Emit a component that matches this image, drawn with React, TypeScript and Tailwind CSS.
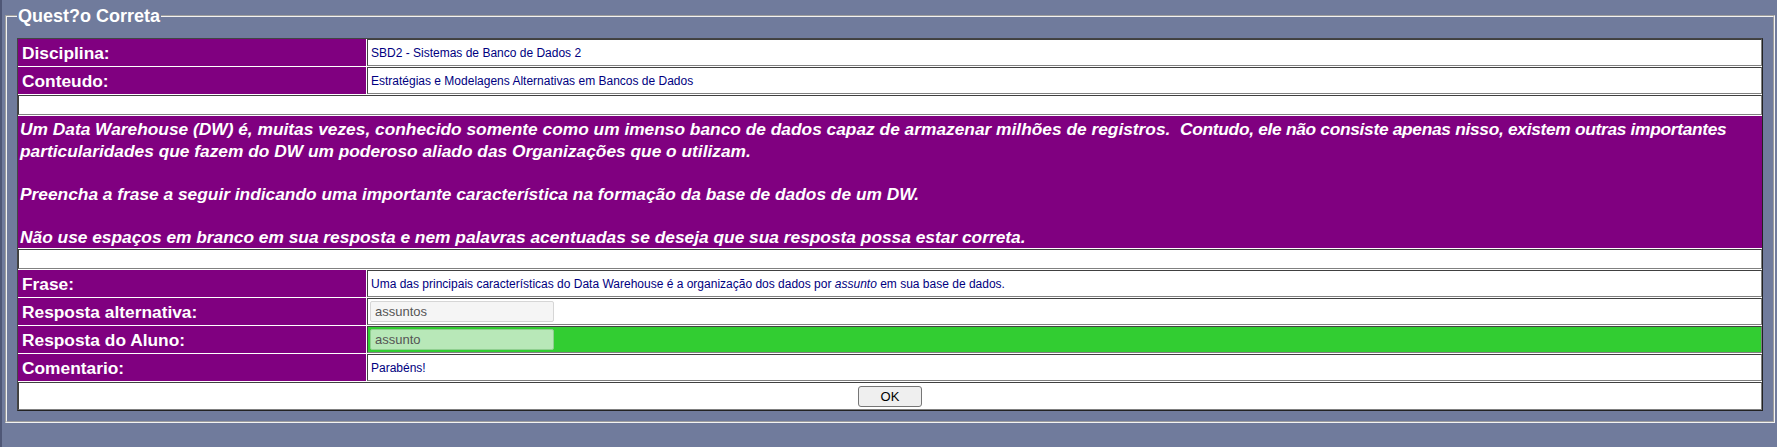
import React from "react";

const label =
  "bg-[#800080] text-white font-bold text-[17.33px] leading-[20px] flex items-center pl-[4px] h-[27px]";
const value =
  "bg-white flex items-center pl-[3px] h-[27px] text-[12px] text-[#000080] border border-t-[#404040] border-l-[#404040] border-b-[#808080] border-r-[#808080]";
const blank =
  "col-span-2 bg-white h-[20px] border border-t-[#404040] border-l-[#404040] border-b-[#808080] border-r-[#808080]";

export default function App() {
  return (
    <div className="min-h-screen bg-[#707b9c] border-l-2 border-[#4f5776] pl-[3px] pr-[2px] pt-[5px] font-['Liberation_Sans',Arial,sans-serif]">
      <fieldset className="border-2 [border-style:groove] border-[#f2f2f2] pl-[10px] pr-[10px] pt-[11px] pb-[10px]">
        <legend className="px-[1px] text-[18px] leading-[22px] font-bold text-white">
          Quest?o Correta
        </legend>
        <div className="grid grid-cols-[348px_1395px] gap-px bg-white border border-t-[#444] border-l-[#444] border-b-[#222] border-r-[#222] w-[1746px]">
          <div className={label}>Disciplina:</div>
          <div className={value}>SBD2 - Sistemas de Banco de Dados 2</div>

          <div className={label}>Conteudo:</div>
          <div className={value}>
            Estratégias e Modelagens Alternativas em Bancos de Dados
          </div>

          <div className={blank}></div>

          <div className="col-span-2 bg-[#800080] h-[132px] pt-[3px] pl-[2px] text-white font-bold italic text-[17.33px] leading-[21.5px]">
            Um Data Warehouse (DW) é, muitas vezes, conhecido somente como um
            imenso banco de dados capaz de armazenar milhões de registros.{"\u00a0"}{" "}
            <span className="tracking-[-0.3px]">
              Contudo, ele não consiste apenas nisso, existem outras importantes
            </span>{" "}
            particularidades que fazem do DW um poderoso aliado das Organizações
            que o utilizam.
            <br />
            <br />
            Preencha a frase a seguir indicando uma importante característica na
            formação da base de dados de um DW.
            <br />
            <br />
            Não use espaços em branco em sua resposta e nem palavras acentuadas
            se deseja que sua resposta possa estar correta.
          </div>

          <div className={blank}></div>

          <div className={label}>Frase:</div>
          <div className={value}>
            <span>
              Uma das principais características do Data Warehouse é a
              organização dos dados por <i>assunto</i> em sua base de dados.
            </span>
          </div>

          <div className={label}>Resposta alternativa:</div>
          <div className="bg-white flex items-center pl-[2px] h-[27px] border border-t-[#404040] border-l-[#404040] border-b-[#808080] border-r-[#808080]">
            <div className="w-[184px] h-[21px] rounded-[2px] border border-[#d6d6d6] bg-[#f5f5f5] pl-[4px] text-[13px] leading-[19px] text-[#555]">
              assuntos
            </div>
          </div>

          <div className={label}>Resposta do Aluno:</div>
          <div className="bg-[#32cd32] flex items-center pl-[2px] h-[27px] border border-t-[#404040] border-l-[#404040] border-b-[#808080] border-r-[#808080]">
            <div className="w-[184px] h-[21px] rounded-[2px] border border-[#8fcf8f] bg-[#b8e8b8] pl-[4px] text-[13px] leading-[19px] text-[#555]">
              assunto
            </div>
          </div>

          <div className={label}>Comentario:</div>
          <div className={value}>Parabéns!</div>

          <div className="col-span-2 bg-white h-[28px] flex items-center justify-center border border-t-[#404040] border-l-[#404040] border-b-[#808080] border-r-[#808080]">
            <button className="w-[64px] h-[21px] rounded-[3px] border border-[#767676] bg-[#efefef] text-[13px] leading-[19px] text-black font-['Liberation_Sans',Arial,sans-serif]">
              OK
            </button>
          </div>
        </div>
      </fieldset>
    </div>
  );
}
